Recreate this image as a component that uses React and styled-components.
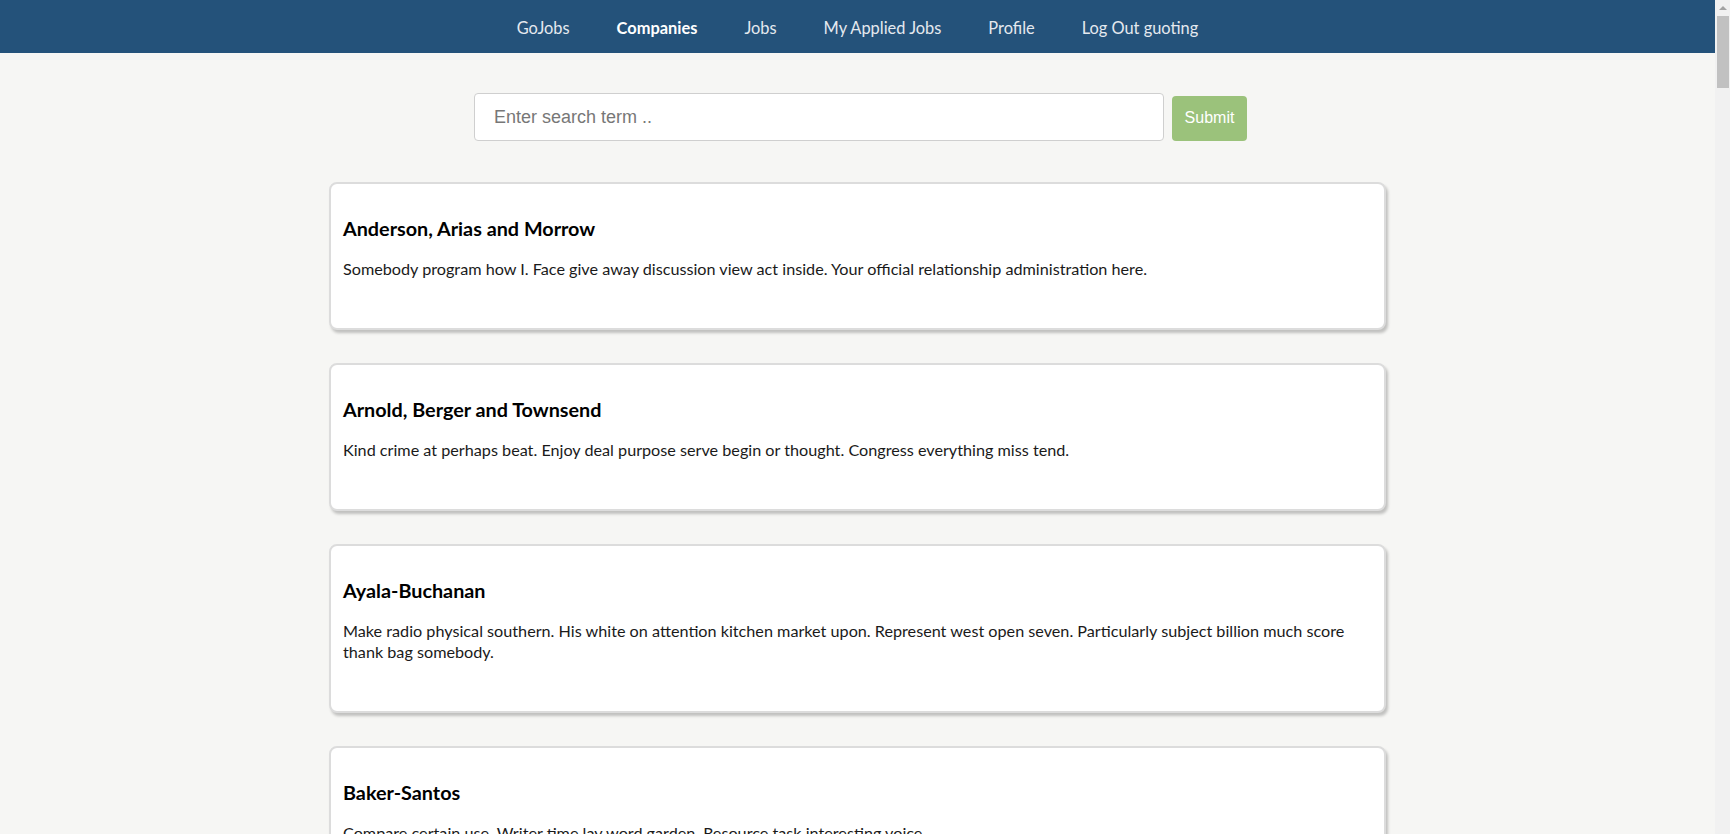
import React, { useState } from 'react';
import styled, { createGlobalStyle } from 'styled-components';

const GlobalStyle = createGlobalStyle`
  body {
    margin: 0;
    background-color: #f6f6f4;
    font-family: Lato, "Noto Sans", sans-serif;
  }
`;

const Page = styled.div`
  display: flex;
  align-items: flex-start;
`;

const Main = styled.main`
  flex: 1;
  min-width: 0;
`;

// stands in for the browser's classic scrollbar gutter
const ScrollTrack = styled.div`
  width: 15px;
  height: 100vh;
  flex-shrink: 0;
  background-color: #f1f1f1;
  display: flex;
  flex-direction: column;
  align-items: center;
`;

const ScrollArrow = styled.div`
  height: 16px;
  width: 100%;
  display: flex;
  align-items: center;
  justify-content: center;

  &::before {
    content: '';
    width: 0;
    height: 0;
    border-left: 4px solid transparent;
    border-right: 4px solid transparent;
    border-bottom: 4px solid #a3a3a3;
  }
`;

const ScrollThumb = styled.div`
  width: 12px;
  height: 72px;
  background-color: #c1c1c1;
`;

const Nav = styled.nav`
  height: 53px;
  background-color: #24527a;
  display: flex;
  align-items: center;
  justify-content: center;
  gap: 47px;
`;

const NavLink = styled.a`
  color: ${(props) => (props.$active ? '#ffffff' : '#e4e9ef')};
  font-weight: ${(props) => (props.$active ? 700 : 400)};
  font-size: 16.4px;
  text-decoration: none;
  cursor: pointer;
  padding-top: 2px;
`;

const SearchForm = styled.form`
  display: flex;
  justify-content: center;
  align-items: center;
  gap: 8px;
  margin-top: 40px;
  padding-left: 6px;
`;

const SearchInput = styled.input`
  width: 690px;
  height: 48px;
  box-sizing: border-box;
  padding: 0 19px;
  border: 1px solid #cfcfcf;
  border-radius: 4px;
  background: #fff;
  font-family: "Liberation Sans", Arial, sans-serif;
  font-size: 18px;
  color: #333;
  outline: none;

  &::placeholder {
    color: #777;
  }
`;

const SubmitButton = styled.button`
  width: 75px;
  height: 45px;
  margin-top: 2px;
  border: none;
  border-radius: 4px;
  background-color: #9bc27b;
  color: #fff;
  font-family: "Liberation Sans", Arial, sans-serif;
  font-size: 16px;
  cursor: pointer;
`;

const CardList = styled.div`
  width: 1057px;
  margin: 41px auto 0;
  display: flex;
  flex-direction: column;
  gap: 33px;
  padding-bottom: 40px;
`;

const Card = styled.div`
  background: #fff;
  border: 2px solid #dcdcdc;
  border-radius: 8px;
  box-shadow: 2px 3px 3px rgba(0, 0, 0, 0.22);
  padding: 32px 14px 49px 12px;
`;

const CompanyName = styled.h3`
  margin: 0 0 18px;
  font-size: 19.8px;
  line-height: 24px;
  font-weight: 700;
  color: #000;
`;

const Description = styled.p`
  margin: 0;
  font-size: 16.2px;
  line-height: 21px;
  color: #1a1a1a;
`;

const companies = [
  {
    name: 'Anderson, Arias and Morrow',
    description:
      'Somebody program how I. Face give away discussion view act inside. Your official relationship administration here.',
  },
  {
    name: 'Arnold, Berger and Townsend',
    description:
      'Kind crime at perhaps beat. Enjoy deal purpose serve begin or thought. Congress everything miss tend.',
  },
  {
    name: 'Ayala-Buchanan',
    description:
      'Make radio physical southern. His white on attention kitchen market upon. Represent west open seven. Particularly subject billion much score thank bag somebody.',
  },
  {
    name: 'Baker-Santos',
    description:
      'Compare certain use. Writer time lay word garden. Resource task interesting voice.',
  },
  {
    name: 'Bauer-Smith',
    description:
      'Hold future recently happy. Test table nature professor image. Strategy various bar.',
  },
];

const App = () => {
  const [searchTerm, setSearchTerm] = useState('');

  const handleSubmit = (event) => {
    event.preventDefault();
  };

  return (
    <Page>
      <GlobalStyle />
      <Main>
        <Nav>
          <NavLink>GoJobs</NavLink>
          <NavLink $active>Companies</NavLink>
          <NavLink>Jobs</NavLink>
          <NavLink>My Applied Jobs</NavLink>
          <NavLink>Profile</NavLink>
          <NavLink>Log Out guoting</NavLink>
        </Nav>
        <SearchForm onSubmit={handleSubmit}>
          <SearchInput
            placeholder="Enter search term .."
            value={searchTerm}
            onChange={(e) => setSearchTerm(e.target.value)}
          />
          <SubmitButton type="submit">Submit</SubmitButton>
        </SearchForm>
        <CardList>
          {companies.map((company, index) => (
            <Card key={index}>
              <CompanyName>{company.name}</CompanyName>
              <Description>{company.description}</Description>
            </Card>
          ))}
        </CardList>
      </Main>
      <ScrollTrack>
        <ScrollArrow />
        <ScrollThumb />
      </ScrollTrack>
    </Page>
  );
};

export default App;
